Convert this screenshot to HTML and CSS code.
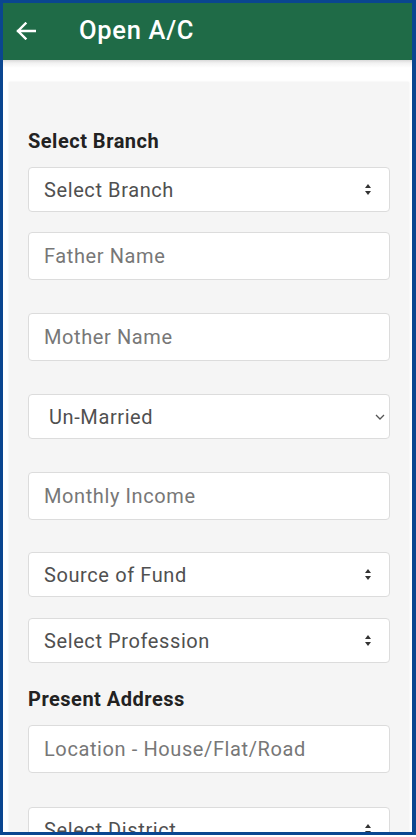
FILE: index.html
```html
<!DOCTYPE html>
<html>
<head>
<meta charset="utf-8">
<link rel="stylesheet" href="styles.css">
</head>
<body>
<div class="frame">
  <header class="appbar">
    <svg class="back" width="20" height="18" viewBox="0 0 20 18"><path d="M19 9H2M9.5 1.5L2 9l7.5 7.5" fill="none" stroke="#fff" stroke-width="2.4" stroke-linecap="square"/></svg>
    <span class="title">Open A/C</span>
  </header>
  <main class="page">
    <section class="card">
      <div class="label first">Select Branch</div>
      <div class="field select gap-a">Select Branch<span class="updown"></span></div>
      <div class="field input gap-b">Father Name</div>
      <div class="field input gap-l">Mother Name</div>
      <div class="field select marital gap-l">Un-Married
        <svg class="chev" width="10" height="6" viewBox="0 0 10 6"><path d="M1 1l4 4 4-4" fill="none" stroke="#555" stroke-width="1.3"/></svg>
      </div>
      <div class="field input gap-l">Monthly Income</div>
      <div class="field select gap-k">Source of Fund<span class="updown"></span></div>
      <div class="field select gap-m">Select Profession<span class="updown"></span></div>
      <div class="label second">Present Address</div>
      <div class="field input gap-a">Location - House/Flat/Road</div>
      <div class="field select gap-n">Select District<span class="updown"></span></div>
    </section>
  </main>
</div>
</body>
</html>
```
FILE: styles.css
```css
html, body {
  margin: 0;
  padding: 0;
  background: #ffffff;
}
body {
  width: 416px;
  height: 837px;
  overflow: hidden;
  font-family: Roboto, "Noto Sans", Arial, sans-serif;
}
.frame {
  box-sizing: border-box;
  width: 416px;
  height: 835px;
  border: 3px solid #0a4690;
  border-right-width: 4px;
  overflow: hidden;
  background: #ffffff;
  display: flex;
  flex-direction: column;
}
.appbar {
  height: 57px;
  flex: none;
  background: #1f6b47;
  display: flex;
  align-items: center;
  color: #fff;
}
.back {
  margin-left: 13px;
  margin-top: -2px;
}
.title {
  margin-left: 43px;
  font-size: 25.5px;
  font-weight: 500;
  letter-spacing: 0.7px;
  margin-top: -4px;
}
.page {
  flex: 1;
  background: linear-gradient(#d9d9d9 0px, #f2f2f2 3px, #ffffff 8px, #ffffff 100%);
  padding: 22px 3px 0 6px;
}
.card {
  background: #f5f5f5;
  box-shadow: 0 0 2px rgba(0,0,0,0.08);
  padding: 0 19px;
  height: 900px;
  display: flex;
  flex-direction: column;
}
.label {
  font-size: 20px;
  font-weight: 700;
  color: #222;
  line-height: 24px;
  letter-spacing: 0.5px;
}
.label.first { margin-top: 47px; }
.label.second { margin-top: 24px; }
.field {
  box-sizing: border-box;
  background: #fff;
  border: 1px solid #dcdcdc;
  border-radius: 4px;
  display: flex;
  align-items: center;
  padding-left: 15px;
  padding-right: 17px;
  font-size: 20px;
  letter-spacing: 0.6px;
  color: #505050;
  flex: none;
}
.select { height: 45px; justify-content: space-between; }
.input { height: 48px; color: #777; }
.marital { padding-left: 20px; padding-right: 4px; }
.gap-a { margin-top: 14px; }
.gap-b { margin-top: 20px; }
.gap-l { margin-top: 33px; }
.gap-k { margin-top: 32px; }
.gap-m { margin-top: 21px; }
.gap-n { margin-top: 34px; }
.updown {
  width: 7px;
  height: 11px;
  position: relative;
}
.updown::before, .updown::after {
  content: "";
  position: absolute;
  left: 0;
  border-left: 3.5px solid transparent;
  border-right: 3.5px solid transparent;
}
.updown::before { top: 0; border-bottom: 4px solid #333; }
.updown::after { bottom: 0; border-top: 4px solid #333; }
```
